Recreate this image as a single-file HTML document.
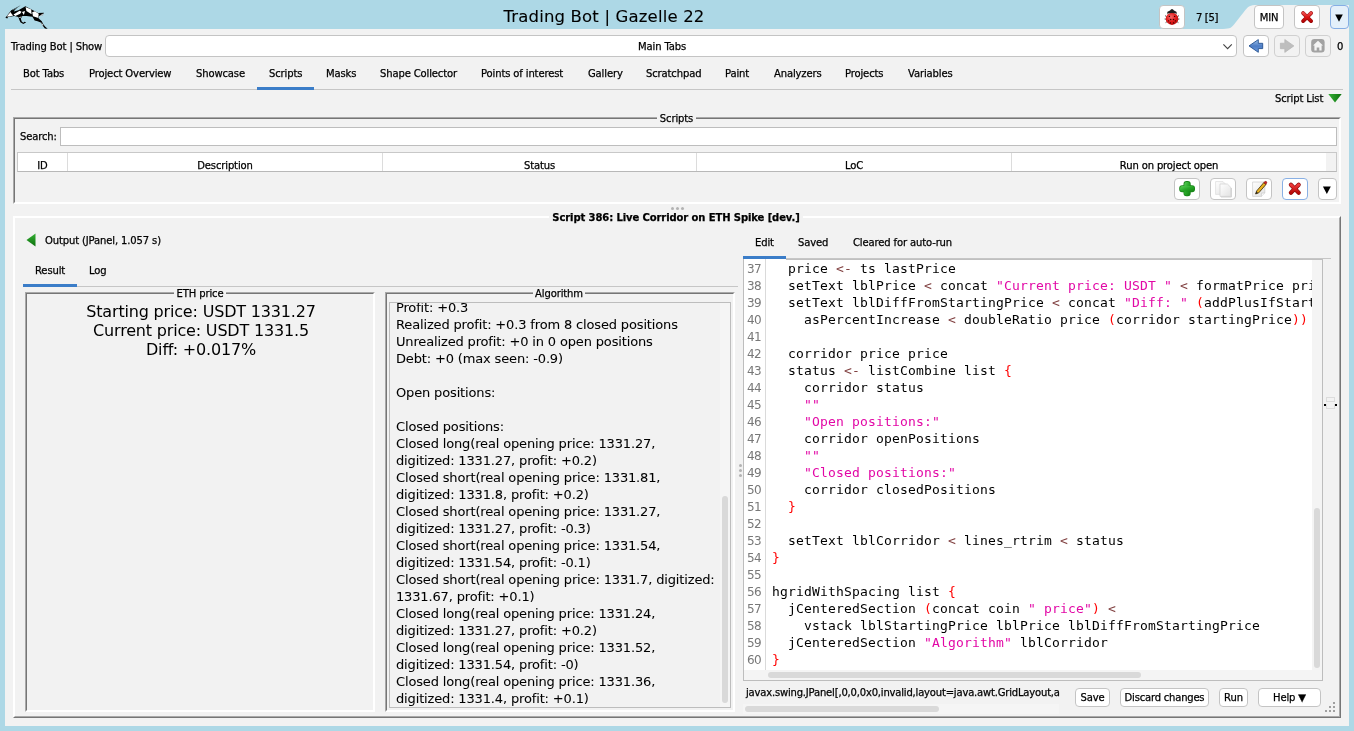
<!DOCTYPE html>
<html lang="en">
<head>
<meta charset="utf-8">
<title>Trading Bot | Gazelle 22</title>
<style>
*{box-sizing:border-box;margin:0;padding:0}
html,body{width:1354px;height:731px;overflow:hidden}
body{background:#add8e6;font-family:"DejaVu Sans","Liberation Sans",sans-serif;font-size:10px;letter-spacing:-0.13px;color:#000;position:relative;-webkit-text-stroke:0.25px currentColor}
.a{position:absolute;white-space:nowrap}
.t{position:absolute;white-space:nowrap;line-height:14px;height:14px;margin-top:1px}
.c{text-align:center}
.btn{position:absolute;background:#fff;border:1px solid #c4c4c4;border-radius:4px}
.btn.dis{background:#f2f2f2;border-color:#d0d0d0}
.btn.foc{border-color:#89b0e4}
.btn .t{left:0;right:0;text-align:center}
#main{left:5px;top:29px;width:1344px;height:697px;background:#f2f2f2}
.mono{-webkit-text-stroke:0;font-family:"DejaVu Sans Mono","Liberation Mono",monospace;font-size:13px;letter-spacing:0.174px}
.code{position:absolute;left:772px;white-space:pre;line-height:17px;height:17px}
.ln{-webkit-text-stroke:0;margin-top:1px;position:absolute;left:743px;width:18px;text-align:right;white-space:pre;line-height:17px;height:17px;color:#787878;font-family:"DejaVu Sans","Liberation Sans",sans-serif;font-size:12px;letter-spacing:-0.63px}
.s{color:#e208a6}
.o{color:#804040}
.b{color:#ff0000}
.alg{-webkit-text-stroke:0.06px #000;margin-top:1px;position:absolute;left:396px;font-size:13px;letter-spacing:-0.15px;line-height:17px;height:17px;white-space:nowrap}
.eth{-webkit-text-stroke:0;position:absolute;left:26px;width:350px;text-align:center;font-size:16px;letter-spacing:-0.18px;line-height:19px;height:19px;white-space:nowrap}
</style>
</head>
<body>
<div id="root" style="position:absolute;left:0;top:0;width:1354px;height:731px;will-change:transform">
<!-- title bar -->
<div class="a" id="title" style="left:1px;width:1206px;top:6px;height:22px;line-height:22px;font-size:16.5px;letter-spacing:0.17px;-webkit-text-stroke:0.1px #000;text-align:center">Trading Bot | Gazelle 22</div>
<svg class="a" id="logo" style="left:0;top:0" width="60" height="34" viewBox="0 0 60 34">
<path d="M5.4 17.7 L10.5 11.3 L11.2 10.3 L20.7 5.2 L17 8 L14.8 9.9 L13.9 11.5 L18.4 10.2 L25.4 6.2 L31.6 9.4 L38.1 13.1 L43.9 12.8 L42.6 15.2 L38.9 16.1 L38.5 18.3 L41.8 21.2 L43.3 24.2 L45.3 26.8 L47.7 28.8 L44.9 28.6 L42.6 25.6 L40.8 22.4 L37.6 21.2 L34.6 20.4 L33.2 17.9 L32.4 16.8 L26.6 16.1 L22.4 16 L20.8 18.4 L21.7 21.6 L23.3 22.7 L24.4 21.8 L26.3 22.3 L23.3 23.9 L20.4 22.2 L19.6 20.4 L18.3 16.9 L14.3 15.9 L8 17 L7.3 18.5 Z" fill="#000"/>
<path d="M6.7 16.6 L10.6 12 L11.7 14 L13.3 15.6 L9.4 16.4 Z M13.5 14.5 L19.6 10.7 L21.5 11.8 L20.2 13.8 L15.3 15.9 Z M22 12 L25 11 L23.9 15 Z M25.6 6.9 L31.2 9.6 L31.6 14.3 L26.4 10.9 Z M32.2 12.3 L34.9 11.3 L38.7 13.8 L38.3 18.1 L33 16.3 Z M39.6 15.7 L43.2 13.4 L42.3 15.4 Z M18.6 17.6 L21.9 16.2 L20.1 18.1 Z M41 22 L43.5 25.2 L42.6 25.4 Z" fill="#fff"/>
<path d="M12.8 10 L19.4 6.3" stroke="#add8e6" stroke-width=".6" opacity=".7"/>
</svg>
<!-- slope + main -->
<svg class="a" style="left:1206px;top:0px" width="148" height="31" viewBox="1206 0 148 31">
<path d="M1220 29 C1229 29 1231 28.4 1234 24.5 L1245 10.5 C1248 6.6 1250 5 1257 5 L1349 5 L1349 30 L1220 30 Z" fill="#f2f2f2"/>
</svg>
<div class="a" id="main"></div>

<!-- top right buttons -->
<div class="btn" style="left:1159px;top:5px;width:26px;height:24px"></div>
<svg class="a" style="left:1159px;top:5px" width="26" height="24" viewBox="1159 5 26 24">
<defs><radialGradient id="gbug" cx=".42" cy=".35" r=".7"><stop offset="0" stop-color="#f46a6a"/><stop offset=".55" stop-color="#e01c1c"/><stop offset="1" stop-color="#b40808"/></radialGradient></defs>
<path d="M1165 15.6 L1166.8 16.8 M1164.6 19 L1166 19.2 M1165.6 22.6 L1167 21.6 M1179 15.6 L1177.2 16.8 M1179.4 19 L1178 19.2 M1178.4 22.6 L1177 21.6" stroke="#555" stroke-width="1"/>
<ellipse cx="1172" cy="18.8" rx="6.3" ry="6.1" fill="url(#gbug)"/>
<path d="M1167 13.8 L1167.5 11.7 L1170 10.6 Q1172 7.6 1174 10.6 L1176.4 11.7 L1177 13.8 Q1172 12.4 1167 13.8 Z" fill="#1e1e1e"/>
<g fill="#300"><circle cx="1169.4" cy="16.4" r=".7"/><circle cx="1174.6" cy="16.4" r=".7"/><circle cx="1170.7" cy="19.4" r=".75"/><circle cx="1173.5" cy="19.4" r=".75"/><circle cx="1168.6" cy="20.8" r=".65"/><circle cx="1175.4" cy="20.8" r=".65"/><circle cx="1170.4" cy="22.9" r=".6"/><circle cx="1173.6" cy="22.9" r=".6"/></g>
</svg>
<div class="t" style="left:1196px;top:10px;letter-spacing:-0.35px">7 [5]</div>
<div class="btn" style="left:1254px;top:5px;width:30px;height:24px"><div class="t" style="top:4px">MIN</div></div>
<div class="btn" style="left:1294px;top:5px;width:26px;height:24px"></div>
<svg class="a" style="left:1299px;top:9px" width="16" height="16" viewBox="0 0 16 16"><defs><linearGradient id="gx0" x1="0" y1="0" x2="0" y2="1"><stop offset="0" stop-color="#ec4a4a"/><stop offset=".5" stop-color="#dc1414"/><stop offset="1" stop-color="#b40606"/></linearGradient></defs><path d="M4.1 4.1 L12.1 12.1 M12.1 4.1 L4.1 12.1" stroke="#960c0c" stroke-width="3.8" stroke-linecap="round"/><path d="M4.1 4.1 L12.1 12.1 M12.1 4.1 L4.1 12.1" stroke="url(#gx0)" stroke-width="2.8" stroke-linecap="round"/></svg>
<div class="btn foc" style="left:1330px;top:5px;width:19px;height:24px;background:#e4f0fa;border-color:#86aee4"></div>
<svg class="a" style="left:1334px;top:13px" width="10" height="10" viewBox="0 0 10 10"><path d="M1.2 1.5 L8.8 1.5 L5 8.8 Z" fill="#000"/></svg>

<!-- row 2 -->
<div class="t" style="left:11px;top:39px">Trading Bot | Show</div>
<div class="a" style="left:105px;top:35px;width:1132px;height:22px;background:#fff;border:1px solid #c4c4c4;border-radius:4px"></div>
<div class="t c" style="left:105px;width:1114px;top:39px">Main Tabs</div>
<svg class="a" style="left:1222px;top:43px" width="12" height="8" viewBox="0 0 12 8"><path d="M1.4 1.3 L5.6 5.6 L9.8 1.3" stroke="#444" stroke-width="1.1" fill="none"/></svg>
<div class="btn" style="left:1243px;top:35px;width:26px;height:22px"></div>
<svg class="a" style="left:1247px;top:38px" width="18" height="16" viewBox="0 0 18 16"><defs><linearGradient id="gb" x1="0" y1="0" x2="0" y2="1"><stop offset="0" stop-color="#a4c8ee"/><stop offset=".5" stop-color="#4c7cc4"/><stop offset="1" stop-color="#6c9ce0"/></linearGradient></defs><path d="M2 7.9 L11.3 1.6 L11.3 5.3 L15.7 5.3 L15.7 10.6 L11.3 10.6 L11.3 14.3 Z" fill="url(#gb)" stroke="#24508e" stroke-width=".9" stroke-linejoin="round"/></svg>
<div class="btn dis" style="left:1274px;top:35px;width:26px;height:22px"></div>
<svg class="a" style="left:1278px;top:38px" width="18" height="16" viewBox="0 0 18 16"><path d="M15.9 7.9 L6.8 1.5 L6.8 5.2 L2.4 5.2 L2.4 10.7 L6.8 10.7 L6.8 14.4 Z" fill="#bebebe" stroke="#b4b4b4" stroke-width=".7" stroke-linejoin="round"/></svg>
<div class="btn dis" style="left:1305px;top:35px;width:26px;height:22px"></div>
<svg class="a" style="left:1310px;top:38px" width="16" height="16" viewBox="0 0 16 16"><rect x="1.2" y="1.1" width="13.4" height="13.4" rx="3.2" fill="#a2a2a2"/><path d="M8 2.8 L13 7.6 L11.6 7.6 L11.6 12.6 L9.3 12.6 L9.3 9.4 L6.7 9.4 L6.7 12.6 L4.4 12.6 L4.4 7.6 L3 7.6 Z" fill="#f4f4f4"/></svg>
<div class="t" style="left:1337px;top:39px">0</div>

<!-- main tabs -->
<div class="a" style="left:11px;top:89px;width:1332px;height:1px;background:#c6c6c6"></div>
<div class="a" style="left:257px;top:87px;width:57px;height:3px;background:#3b7dc8"></div>
<div class="t" style="left:23px;top:66px">Bot Tabs</div>
<div class="t" style="left:89px;top:66px">Project Overview</div>
<div class="t" style="left:196px;top:66px">Showcase</div>
<div class="t" style="left:269px;top:66px">Scripts</div>
<div class="t" style="left:326px;top:66px">Masks</div>
<div class="t" style="left:380px;top:66px">Shape Collector</div>
<div class="t" style="left:481px;top:66px">Points of interest</div>
<div class="t" style="left:588px;top:66px">Gallery</div>
<div class="t" style="left:646px;top:66px">Scratchpad</div>
<div class="t" style="left:725px;top:66px">Paint</div>
<div class="t" style="left:774px;top:66px">Analyzers</div>
<div class="t" style="left:845px;top:66px">Projects</div>
<div class="t" style="left:908px;top:66px">Variables</div>

<div class="t" style="left:1275px;top:91px">Script List</div>
<svg class="a" style="left:1328px;top:93px" width="15" height="11" viewBox="0 0 15 11"><defs><linearGradient id="gg" x1="0" y1="0" x2="1" y2="0"><stop offset="0" stop-color="#35b035"/><stop offset="1" stop-color="#0c700c"/></linearGradient></defs><path d="M0.3 1 L13.7 1 L7 9.6 Z" fill="url(#gg)"/></svg>

<!-- Scripts titled panel -->
<div class="a" style="left:13px;top:117px;width:1328px;height:87px;border:1px solid #fff;border-top-color:#a9a9a9;border-left-color:#a9a9a9"></div>
<div class="a" style="left:14px;top:118px;width:1326px;height:85px;border:1px solid #fff;border-top-color:#767676;border-left-color:#767676"></div>
<div class="t c" style="left:657px;width:39px;top:111px;background:#f2f2f2">Scripts</div>
<div class="t" style="left:20px;top:129px">Search:</div>
<div class="a" style="left:60px;top:127px;width:1277px;height:19px;background:#fff;border:1px solid #bdbdbd"></div>
<div class="a" id="thead" style="left:17px;top:152px;width:1320px;height:20px;background:#fff;border:1px solid #c8c8c8;border-bottom-color:#b8b8b8"></div>
<div class="a" style="left:67px;top:153px;width:1px;height:18px;background:#dcdcdc"></div>
<div class="a" style="left:382px;top:153px;width:1px;height:18px;background:#dcdcdc"></div>
<div class="a" style="left:696px;top:153px;width:1px;height:18px;background:#dcdcdc"></div>
<div class="a" style="left:1011px;top:153px;width:1px;height:18px;background:#dcdcdc"></div>
<div class="a" style="left:1326px;top:153px;width:10px;height:18px;background:#f2f2f2"></div>
<div class="t c" style="left:18px;width:49px;top:158px">ID</div>
<div class="t c" style="left:68px;width:314px;top:158px">Description</div>
<div class="t c" style="left:383px;width:313px;top:158px">Status</div>
<div class="t c" style="left:697px;width:314px;top:158px">LoC</div>
<div class="t c" style="left:1012px;width:314px;top:158px">Run on project open</div>

<div class="btn" style="left:1174px;top:178px;width:26px;height:22px"></div>
<div class="btn" style="left:1210px;top:178px;width:26px;height:22px"></div>
<div class="btn" style="left:1246px;top:178px;width:26px;height:22px"></div>
<div class="btn foc" style="left:1282px;top:178px;width:26px;height:22px"></div>
<div class="btn" style="left:1318px;top:178px;width:19px;height:22px"></div>
<svg class="a" style="left:1164px;top:170px" width="180" height="40" viewBox="1164 170 180 40">
<defs>
<linearGradient id="gp" x1="0" y1="0" x2="1" y2="1"><stop offset="0" stop-color="#58d058"/><stop offset=".5" stop-color="#28a828"/><stop offset="1" stop-color="#148414"/></linearGradient>
<linearGradient id="gx" x1="0" y1="0" x2="0" y2="1"><stop offset="0" stop-color="#ee3a3a"/><stop offset="1" stop-color="#b80808"/></linearGradient>
<linearGradient id="gy" x1="0" y1="0" x2="1" y2="1"><stop offset="0" stop-color="#fff"/><stop offset="1" stop-color="#e2e2e2"/></linearGradient>
</defs>
<g stroke="#188418" stroke-width="1.6"><rect x="1184.3" y="181.9" width="5.6" height="13.6" rx="2.2" fill="#188418"/><rect x="1180" y="186" width="14.2" height="5.4" rx="2.2" fill="#188418"/></g>
<rect x="1184.3" y="181.9" width="5.6" height="13.6" rx="2.2" fill="url(#gp)"/><rect x="1180" y="186" width="14.2" height="5.4" rx="2.2" fill="url(#gp)"/>
<path d="M1215.6 181.6 H1223 L1226.4 185 V194.4 H1215.6 Z" fill="url(#gy)" stroke="#dedede" stroke-width=".8"/>
<path d="M1220 184 H1227.4 L1230.8 187.4 V196.4 H1220 Z" fill="url(#gy)" stroke="#d4d4d4" stroke-width=".8"/>
<path d="M1221 197 H1231.4 V188" stroke="#c8c8c8" stroke-width=".8" fill="none"/>
<path d="M1252.6 182 H1264.8 V193 L1261.4 196.4 H1252.6 Z" fill="url(#gy)" stroke="#d0d0d0" stroke-width=".8"/>
<path d="M1261.4 196.4 V193 H1264.8" fill="#f8f8f8" stroke="#c8c8c8" stroke-width=".7"/>
<path d="M1255.6 194 L1256.6 191 L1263.8 182.6 L1266 184.4 L1258.8 192.8 Z" fill="#e8b020" stroke="#3a2a08" stroke-width=".8" stroke-linejoin="round"/>
<path d="M1263.8 182.6 L1264.9 181.4 Q1266.2 181 1267 182.2 L1266 184.4 Z" fill="#d02020" stroke="#701010" stroke-width=".5"/>
<path d="M1255.6 194 L1256.4 191.6 L1258 193 Z" fill="#222"/>
<path d="M1290.9 184.8 L1298.7 192.8 M1298.7 184.8 L1290.9 192.8" stroke="#8a0a0a" stroke-width="4.2" stroke-linecap="round"/>
<path d="M1290.9 184.8 L1298.7 192.8 M1298.7 184.8 L1290.9 192.8" stroke="url(#gx)" stroke-width="3" stroke-linecap="round"/>
<path d="M1322.9 186.6 L1330.8 186.6 L1326.85 194 Z" fill="#000"/>
</svg>
<!-- splitter dots -->
<div class="a" style="left:671px;top:207px;width:3px;height:3px;border-radius:50%;background:#b2b2b2;box-shadow:5px 0 #b2b2b2,10px 0 #b2b2b2"></div>

<!-- lower titled panel -->
<div class="a" style="left:13px;top:216px;width:1328px;height:502px;border:1px solid #767676;border-top-color:#fff;border-left-color:#fff"></div>
<div class="a" style="left:14px;top:217px;width:1326px;height:500px;border:1px solid #a9a9a9;border-top-color:#fff;border-left-color:#fff"></div>
<div class="t c" style="left:549px;width:254px;top:210px;background:#f2f2f2;font-weight:bold;letter-spacing:-0.1px">Script 386: Live Corridor on ETH Spike [dev.]</div>

<!-- left output -->
<svg class="a" style="left:26px;top:233px" width="10" height="14" viewBox="0 0 10 14"><defs><linearGradient id="gl" x1="0" y1="0" x2="0" y2="1"><stop offset="0" stop-color="#35b035"/><stop offset="1" stop-color="#0c700c"/></linearGradient></defs><path d="M9.5 0.5 L9.5 13.5 L0.5 7 Z" fill="url(#gl)"/></svg>
<div class="t" style="left:45px;top:233px">Output (JPanel, 1.057 s)</div>
<div class="a" style="left:23px;top:286px;width:715px;height:1px;background:#c6c6c6"></div>
<div class="a" style="left:23px;top:284px;width:54px;height:3px;background:#3b7dc8"></div>
<div class="t" style="left:35px;top:263px">Result</div>
<div class="t" style="left:89px;top:263px">Log</div>

<!-- ETH price panel -->
<div class="a" style="left:25px;top:292px;width:350px;height:420px;border:1px solid #fff;border-top-color:#a9a9a9;border-left-color:#a9a9a9"></div>
<div class="a" style="left:26px;top:293px;width:348px;height:418px;border:1px solid #fff;border-top-color:#767676;border-left-color:#767676"></div>
<div class="t c" style="left:174px;width:52px;top:286px;background:#f2f2f2">ETH price</div>
<div class="eth" style="top:302px">Starting price: USDT 1331.27</div>
<div class="eth" style="top:321px">Current price: USDT 1331.5</div>
<div class="eth" style="top:340px">Diff: +0.017%</div>

<!-- Algorithm panel -->
<div class="a" style="left:385px;top:292px;width:350px;height:420px;border:1px solid #fff;border-top-color:#a9a9a9;border-left-color:#a9a9a9"></div>
<div class="a" style="left:386px;top:293px;width:348px;height:418px;border:1px solid #fff;border-top-color:#767676;border-left-color:#767676"></div>
<div class="t c" style="left:533px;width:52px;top:286px;background:#f2f2f2">Algorithm</div>
<div class="a" id="algbox" style="left:389px;top:302px;width:342px;height:406px;border:1px solid #bdbdbd;overflow:hidden">
<div class="a" style="left:0;top:0;width:330px;height:405px;overflow:hidden">
</div>
</div>
<div class="a" style="left:390px;top:303px;width:330px;height:404px;overflow:hidden">
<div style="position:absolute;left:-390px;top:-303px;width:1354px;height:731px">
<div class="alg" style="top:298px">Profit: +0.3</div>
<div class="alg" style="top:315px">Realized profit: +0.3 from 8 closed positions</div>
<div class="alg" style="top:332px">Unrealized profit: +0 in 0 open positions</div>
<div class="alg" style="top:349px">Debt: +0 (max seen: -0.9)</div>
<div class="alg" style="top:383px">Open positions:</div>
<div class="alg" style="top:417px">Closed positions:</div>
<div class="alg" style="top:434px">Closed long(real opening price: 1331.27,</div>
<div class="alg" style="top:451px">digitized: 1331.27, profit: +0.2)</div>
<div class="alg" style="top:468px">Closed short(real opening price: 1331.81,</div>
<div class="alg" style="top:485px">digitized: 1331.8, profit: +0.2)</div>
<div class="alg" style="top:502px">Closed short(real opening price: 1331.27,</div>
<div class="alg" style="top:519px">digitized: 1331.27, profit: -0.3)</div>
<div class="alg" style="top:536px">Closed short(real opening price: 1331.54,</div>
<div class="alg" style="top:553px">digitized: 1331.54, profit: -0.1)</div>
<div class="alg" style="top:570px">Closed short(real opening price: 1331.7, digitized:</div>
<div class="alg" style="top:587px">1331.67, profit: +0.1)</div>
<div class="alg" style="top:604px">Closed long(real opening price: 1331.24,</div>
<div class="alg" style="top:621px">digitized: 1331.27, profit: +0.2)</div>
<div class="alg" style="top:638px">Closed long(real opening price: 1331.52,</div>
<div class="alg" style="top:655px">digitized: 1331.54, profit: -0)</div>
<div class="alg" style="top:672px">Closed long(real opening price: 1331.36,</div>
<div class="alg" style="top:689px">digitized: 1331.4, profit: +0.1)</div>
</div>
</div>
<div class="a" style="left:720px;top:303px;width:10px;height:404px;background:#f5f5f5"></div>
<div class="a" style="left:722px;top:496px;width:6px;height:207px;background:#d9d9d9;border-radius:3px"></div>

<!-- vertical divider dots -->
<div class="a" style="left:739px;top:464px;width:3px;height:3px;border-radius:50%;background:#b2b2b2;box-shadow:0 5px #b2b2b2,0 10px #b2b2b2"></div>

<!-- right: editor tabs -->
<div class="a" style="left:743px;top:258px;width:588px;height:1px;background:#c6c6c6"></div>
<div class="a" style="left:743px;top:256px;width:43px;height:3px;background:#3b7dc8"></div>
<div class="t" style="left:755px;top:235px">Edit</div>
<div class="t" style="left:798px;top:235px">Saved</div>
<div class="t" style="left:853px;top:235px">Cleared for auto-run</div>

<!-- editor -->
<div class="a" id="ed" style="left:743px;top:259px;width:580px;height:422px;background:#fff;border:1px solid #bdbdbd;border-top:0"></div>
<div class="a" style="left:765px;top:259px;width:1px;height:411px;background:#dadada"></div>
<div class="a" style="left:1312px;top:259px;width:10px;height:421px;background:#f4f4f4"></div>
<div class="a" style="left:744px;top:670px;width:578px;height:10px;background:#f4f4f4"></div>
<div class="a" style="left:1314px;top:508px;width:6px;height:160px;background:#d9d9d9;border-radius:3px"></div>
<div class="a" style="left:768px;top:672px;width:373px;height:6px;background:#d9d9d9;border-radius:3px"></div>
<div class="a" style="left:786px;top:259px;width:537px;height:1px;background:#c0c0c0"></div>
<div class="a" id="codeclip" style="left:744px;top:259px;width:568px;height:411px;overflow:hidden">
<div class="mono" style="position:absolute;left:-744px;top:-259px;width:1354px;height:731px">
<div class="ln" style="top:260px">37</div><div class="code" style="top:260px">  price <span class="o">&lt;-</span> ts lastPrice</div>
<div class="ln" style="top:277px">38</div><div class="code" style="top:277px">  setText lblPrice <span class="o">&lt;</span> concat <span class="s">"Current price: USDT "</span> <span class="o">&lt;</span> formatPrice price</div>
<div class="ln" style="top:294px">39</div><div class="code" style="top:294px">  setText lblDiffFromStartingPrice <span class="o">&lt;</span> concat <span class="s">"Diff: "</span> <span class="b">(</span>addPlusIfStartingWithDigit</div>
<div class="ln" style="top:311px">40</div><div class="code" style="top:311px">    asPercentIncrease <span class="o">&lt;</span> doubleRatio price <span class="b">(</span>corridor startingPrice<span class="b">))</span></div>
<div class="ln" style="top:328px">41</div>
<div class="ln" style="top:345px">42</div><div class="code" style="top:345px">  corridor price price</div>
<div class="ln" style="top:362px">43</div><div class="code" style="top:362px">  status <span class="o">&lt;-</span> listCombine list <span class="b">{</span></div>
<div class="ln" style="top:379px">44</div><div class="code" style="top:379px">    corridor status</div>
<div class="ln" style="top:396px">45</div><div class="code" style="top:396px">    <span class="s">""</span></div>
<div class="ln" style="top:413px">46</div><div class="code" style="top:413px">    <span class="s">"Open positions:"</span></div>
<div class="ln" style="top:430px">47</div><div class="code" style="top:430px">    corridor openPositions</div>
<div class="ln" style="top:447px">48</div><div class="code" style="top:447px">    <span class="s">""</span></div>
<div class="ln" style="top:464px">49</div><div class="code" style="top:464px">    <span class="s">"Closed positions:"</span></div>
<div class="ln" style="top:481px">50</div><div class="code" style="top:481px">    corridor closedPositions</div>
<div class="ln" style="top:498px">51</div><div class="code" style="top:498px">  <span class="b">}</span></div>
<div class="ln" style="top:515px">52</div>
<div class="ln" style="top:532px">53</div><div class="code" style="top:532px">  setText lblCorridor <span class="o">&lt;</span> lines_rtrim <span class="o">&lt;</span> status</div>
<div class="ln" style="top:549px">54</div><div class="code" style="top:549px"><span class="b">}</span></div>
<div class="ln" style="top:566px">55</div>
<div class="ln" style="top:583px">56</div><div class="code" style="top:583px">hgridWithSpacing list <span class="b">{</span></div>
<div class="ln" style="top:600px">57</div><div class="code" style="top:600px">  jCenteredSection <span class="b">(</span>concat coin <span class="s">" price"</span><span class="b">)</span> <span class="o">&lt;</span></div>
<div class="ln" style="top:617px">58</div><div class="code" style="top:617px">    vstack lblStartingPrice lblPrice lblDiffFromStartingPrice</div>
<div class="ln" style="top:634px">59</div><div class="code" style="top:634px">  jCenteredSection <span class="s">"Algorithm"</span> lblCorridor</div>
<div class="ln" style="top:651px">60</div><div class="code" style="top:651px"><span class="b">}</span></div>
</div>
</div>

<!-- bottom status -->
<div class="a" style="left:743px;top:704px;width:316px;height:10px;background:#f5f5f5"></div>
<div class="a" style="left:743px;top:685px;width:317px;height:16px;overflow:hidden"><div class="t" style="left:3px;top:0px;letter-spacing:-0.185px">javax.swing.JPanel[,0,0,0x0,invalid,layout=java.awt.GridLayout,alignmentX=0.0</div></div>
<div class="a" style="left:745px;top:706px;width:194px;height:6px;background:#d9d9d9;border-radius:3px"></div>
<div class="btn" style="left:1075px;top:688px;width:35px;height:19px"><div class="t" style="top:1px">Save</div></div>
<div class="btn" style="left:1120px;top:688px;width:89px;height:19px"><div class="t" style="top:1px;letter-spacing:-0.2px">Discard changes</div></div>
<div class="btn" style="left:1219px;top:688px;width:29px;height:19px"><div class="t" style="top:1px">Run</div></div>
<div class="btn" style="left:1258px;top:688px;width:63px;height:19px"><div class="t" style="top:1px">Help ▼</div></div>

<!-- right divider -->
<div class="a" style="left:1324px;top:404px;width:2px;height:2px;background:#000;box-shadow:11px 0 #000"></div>
<div class="a" style="left:1326px;top:397px;width:9px;height:5px;border:1px solid #dcdcdc"></div>
<div class="a" style="left:1326px;top:404px;width:9px;height:5px;border:1px solid #dcdcdc;border-top:0"></div>
<!-- grip -->
<div class="a" style="left:1333px;top:702px;width:2px;height:2px;background:#a0a0a0;box-shadow:0 4px #a0a0a0,0 8px #a0a0a0,-4px 4px #a0a0a0,-4px 8px #a0a0a0,-8px 8px #a0a0a0"></div>
</div>
</body>
</html>
